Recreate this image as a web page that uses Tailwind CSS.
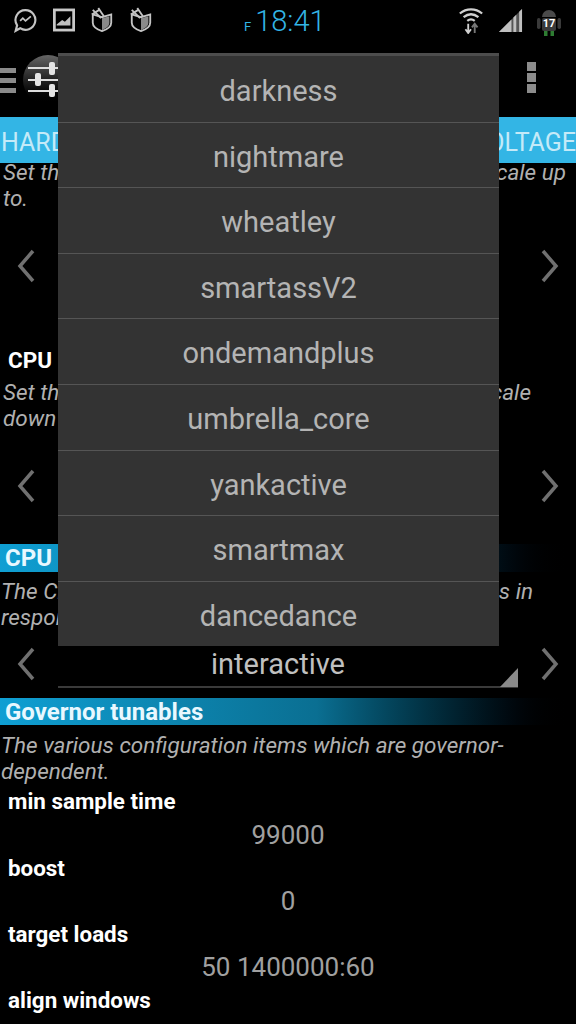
<!DOCTYPE html>
<html lang="en">
<head>
    <meta charset="UTF-8">
    <meta name="viewport" content="width=device-width, initial-scale=1.0">
    <title>Governor</title>
    <script src="https://cdn.jsdelivr.net/npm/@tailwindcss/browser@4"></script>
</head>
<body class="bg-black">
<div class="relative w-[576px] h-[1024px] overflow-hidden bg-black font-[Roboto]">

    <!-- status bar -->
    <div class="relative h-[52px]">
        <div class="flex items-center pl-[13px] pt-[7px]">
            <svg class="w-[25px] h-[26px]" viewBox="0 0 28 28" fill="none" stroke="#c4c4c4" stroke-width="2.400"><path d="M14 3a11 11 0 1 1-6 20.200L3 26l1.600-6A11 11 0 0 1 14 3z"/><path d="M8 15l3-3 3 3 6-5" stroke-width="2"/></svg>
            <svg class="w-[22px] h-[24px] ml-[15px]" viewBox="0 0 24 26"><rect x="1.500" y="2" width="21" height="22" fill="none" stroke="#c8c8c8" stroke-width="3"/><path d="M4 18l6-5 3 2 6-6v10H4z" fill="#c0c0c0"/></svg>
            <svg class="w-[24px] h-[26px] ml-[15px]" viewBox="0 0 26 28" fill="none" stroke="#c4c4c4" stroke-width="2"><path d="M3 8l10 3 10-3v9c0 4-4 7-10 9-6-2-10-5-10-9z"/><path d="M13 12v13c4-2 8-4 8-8v-7z" fill="#8a8a8a" stroke="none"/><path d="M3 3l9 9M9 1l6 9M2 8l8-5"/></svg>
            <svg class="w-[24px] h-[26px] ml-[15px]" viewBox="0 0 26 28" fill="none" stroke="#c4c4c4" stroke-width="2"><path d="M3 8l10 3 10-3v9c0 4-4 7-10 9-6-2-10-5-10-9z"/><path d="M13 12v13c4-2 8-4 8-8v-7z" fill="#8a8a8a" stroke="none"/><path d="M3 3l9 9M9 1l6 9M2 8l8-5"/></svg>
        </div>
        <div class="absolute left-[244px] top-[3px] flex items-baseline gap-[4px] text-[#33b5e5]">
            <span class="text-[13px]">F</span>
            <span class="text-[29px] leading-[36px] font-light">18:41</span>
        </div>
        <div class="absolute left-[458px] top-[6px] flex items-start">
            <svg class="w-[26px] h-[28px]" viewBox="0 0 28 30" fill="none" stroke="#d0d0d0" stroke-width="2.400"><path d="M2 8c7-6 17-6 24 0M6 12c5-4 11-4 16 0M10 16c2.500-2 5.500-2 8 0"/><path d="M11 19v10M8 25l3 4 3-4" stroke-width="2"/><path d="M18 29V19M15 23l3-4 3 4" stroke="#777" stroke-width="2"/></svg>
            <svg class="w-[25px] h-[25px] ml-[14px] mt-[2px]" viewBox="0 0 26 26"><path d="M25 1v24H1z" fill="#555"/><path d="M14 12v13H1zM19 7v18h-3V10zM25 1v24h-3V4z" fill="#c0c0c0"/></svg>
            <div class="relative w-[24px] h-[28px] ml-[14px] mt-[2px]">
                <svg class="w-[24px] h-[28px]" viewBox="0 0 24 28"><path d="M5 9a7 7 0 0 1 14 0z" fill="#4a4a4a"/><rect x="5" y="10" width="14" height="13" rx="2" fill="#3a3a3a"/><rect x="0" y="10" width="3.500" height="11" rx="1.700" fill="#3a3a3a"/><rect x="20.500" y="10" width="3.500" height="11" rx="1.700" fill="#3a3a3a"/><rect x="7" y="23" width="3.500" height="5" fill="#2e7d32"/><rect x="13.500" y="23" width="3.500" height="5" fill="#2e7d32"/></svg>
                <span class="absolute left-0 top-[9px] w-full text-center text-[11px] leading-[13px] font-bold text-white">17</span>
            </div>
        </div>
    </div>

    <!-- action bar -->
    <div class="relative h-[65px] flex items-start">
        <div class="flex flex-col gap-[5px] w-[16px] mt-[16px]">
            <div class="h-[5px] bg-[#8a8a8a]"></div>
            <div class="h-[5px] bg-[#8a8a8a]"></div>
            <div class="h-[5px] bg-[#8a8a8a]"></div>
        </div>
        <div class="relative w-[50px] h-[50px] ml-[7px] mt-[3px] rounded-full bg-gradient-to-b from-[#666666] via-[#222222] to-black">
            <div class="absolute left-[5px] top-[12px] w-[40px] h-[2px] bg-[#dddddd]"></div>
            <div class="absolute left-[5px] top-[24px] w-[40px] h-[2px] bg-[#dddddd]"></div>
            <div class="absolute left-[5px] top-[35px] w-[40px] h-[2px] bg-[#dddddd]"></div>
            <div class="absolute left-[26px] top-[7px] w-[6px] h-[13px] rounded-[2px] bg-[#e4e4e4]"></div>
            <div class="absolute left-[12px] top-[18px] w-[6px] h-[13px] rounded-[2px] bg-[#e4e4e4]"></div>
            <div class="absolute left-[26px] top-[29px] w-[6px] h-[13px] rounded-[2px] bg-[#e4e4e4]"></div>
        </div>
        <div class="absolute left-[527px] top-[10px] flex flex-col gap-[2px]">
            <div class="w-[9px] h-[9px] bg-[#8c8c8c]"></div>
            <div class="w-[9px] h-[9px] bg-[#8c8c8c]"></div>
            <div class="w-[9px] h-[9px] bg-[#8c8c8c]"></div>
        </div>
    </div>

    <!-- tabs -->
    <div class="h-[46px] pt-[6px] bg-[#33b5e5] flex justify-between items-center text-[25px] text-[#c5eaf8] whitespace-nowrap">
        <span class="ml-[1px]">HARDWARE</span>
        <span>VOLTAGE</span>
    </div>

    <!-- max frequency -->
    <div class="px-[3px] mt-[-4px] text-[22.500px] leading-[26px] italic text-[#b0b0b0]">
        <p class="flex justify-between mr-[7px]"><span>Set the maximum</span><span>will scale up</span></p>
        <p>to.</p>
    </div>
    <div class="h-[136px] pt-[38px] flex justify-between px-[17px]">
        <svg class="w-[18px] h-[34px]" viewBox="0 0 18 34" fill="none" stroke="#707070" stroke-width="3.500"><path d="M16 2L3 17l13 15"/></svg>
        <svg class="w-[18px] h-[34px]" viewBox="0 0 18 34" fill="none" stroke="#707070" stroke-width="3.500"><path d="M2 2l13 15L2 32"/></svg>
    </div>

    <!-- min frequency -->
    <div class="pl-[8px] text-[22.500px] leading-[26px] font-bold text-white">CPU min frequency</div>
    <div class="px-[3px] mt-[6px] text-[22.500px] leading-[26px] italic text-[#b0b0b0]">
        <p class="flex justify-between mr-[42px]"><span>Set the minimum</span><span>will scale</span></p>
        <p>down to.</p>
    </div>
    <div class="h-[113px] pt-[38px] flex justify-between px-[17px]">
        <svg class="w-[18px] h-[34px]" viewBox="0 0 18 34" fill="none" stroke="#707070" stroke-width="3.500"><path d="M16 2L3 17l13 15"/></svg>
        <svg class="w-[18px] h-[34px]" viewBox="0 0 18 34" fill="none" stroke="#707070" stroke-width="3.500"><path d="M2 2l13 15L2 32"/></svg>
    </div>

    <!-- governor -->
    <div class="h-[28px] pl-[5px] flex items-center text-[24px] font-bold text-[#e8f8ff] bg-gradient-to-r from-[#0f9fd3] via-[#0a6f92] via-55% to-black to-100%">CPU governor</div>
    <div class="px-[1px] mt-[6px] text-[22.500px] leading-[26px] italic text-[#b0b0b0]">
        <p class="flex justify-between mr-[42px]"><span>The CPU governor</span><span>changes in</span></p>
        <p>response to load.</p>
    </div>
    <div class="flex items-start justify-between px-[17px] mt-[17px] h-[51px]">
        <svg class="w-[18px] h-[34px]" viewBox="0 0 18 34" fill="none" stroke="#707070" stroke-width="3.500"><path d="M16 2L3 17l13 15"/></svg>
        <div class="relative w-[460px] h-[41px] pr-[20px] border-b-2 border-[#3a3a3a] text-center text-[29px] leading-[34px] text-[#c0c0c0]">
            interactive
            <div class="absolute right-0 bottom-[-1px] w-0 h-0 border-l-[18px] border-l-transparent border-b-[19px] border-b-[#8a8a8a]"></div>
        </div>
        <svg class="w-[18px] h-[34px]" viewBox="0 0 18 34" fill="none" stroke="#707070" stroke-width="3.500"><path d="M2 2l13 15L2 32"/></svg>
    </div>

    <!-- tunables -->
    <div class="h-[27px] pl-[5px] flex items-center text-[24px] font-bold text-[#e8f8ff] bg-gradient-to-r from-[#0f9fd3] via-[#0a6f92] via-55% to-black to-100%">Governor tunables</div>
    <div class="px-[1px] mt-[7px] text-[22.500px] leading-[26px] italic text-[#b0b0b0]">
        <p>The various configuration items which are governor-</p>
        <p>dependent.</p>
    </div>
    <div class="mt-[1.400px]">
        <div class="h-[33.200px] pl-[8px] flex items-center text-[22.400px] font-bold text-white">min sample time</div>
        <div class="h-[33.200px] flex items-center justify-center text-[26px] text-[#a0a0a0]">99000</div>
        <div class="h-[33.200px] pl-[8px] flex items-center text-[22.400px] font-bold text-white">boost</div>
        <div class="h-[33.200px] flex items-center justify-center text-[26px] text-[#a0a0a0]">0</div>
        <div class="h-[33.200px] pl-[8px] flex items-center text-[22.400px] font-bold text-white">target loads</div>
        <div class="h-[33.200px] flex items-center justify-center text-[26px] text-[#a0a0a0]">50 1400000:60</div>
        <div class="h-[33.200px] pl-[8px] flex items-center text-[22.400px] font-bold text-white">align windows</div>
    </div>

    <!-- governor dropdown -->
    <div class="absolute left-[58px] top-[53px] w-[441px] h-[593px] bg-[#333333] border-t-[3px] border-[#4d4d4d] text-[29px] text-[#b4b4b4] text-center divide-y divide-[#555555] overflow-hidden">
        <div class="h-[66.600px] pt-[3px] leading-[65px]">darkness</div>
        <div class="h-[65.600px] pt-[2px] leading-[65px]">nightmare</div>
        <div class="h-[65.600px] pt-[2px] leading-[65px]">wheatley</div>
        <div class="h-[65.600px] pt-[2px] leading-[65px]">smartassV2</div>
        <div class="h-[65.600px] pt-[2px] leading-[65px]">ondemandplus</div>
        <div class="h-[65.600px] pt-[2px] leading-[65px]">umbrella_core</div>
        <div class="h-[65.600px] pt-[2px] leading-[65px]">yankactive</div>
        <div class="h-[65.600px] pt-[2px] leading-[65px]">smartmax</div>
        <div class="h-[65.600px] pt-[2px] leading-[65px]">dancedance</div>
    </div>
</div>
</body>
</html>
